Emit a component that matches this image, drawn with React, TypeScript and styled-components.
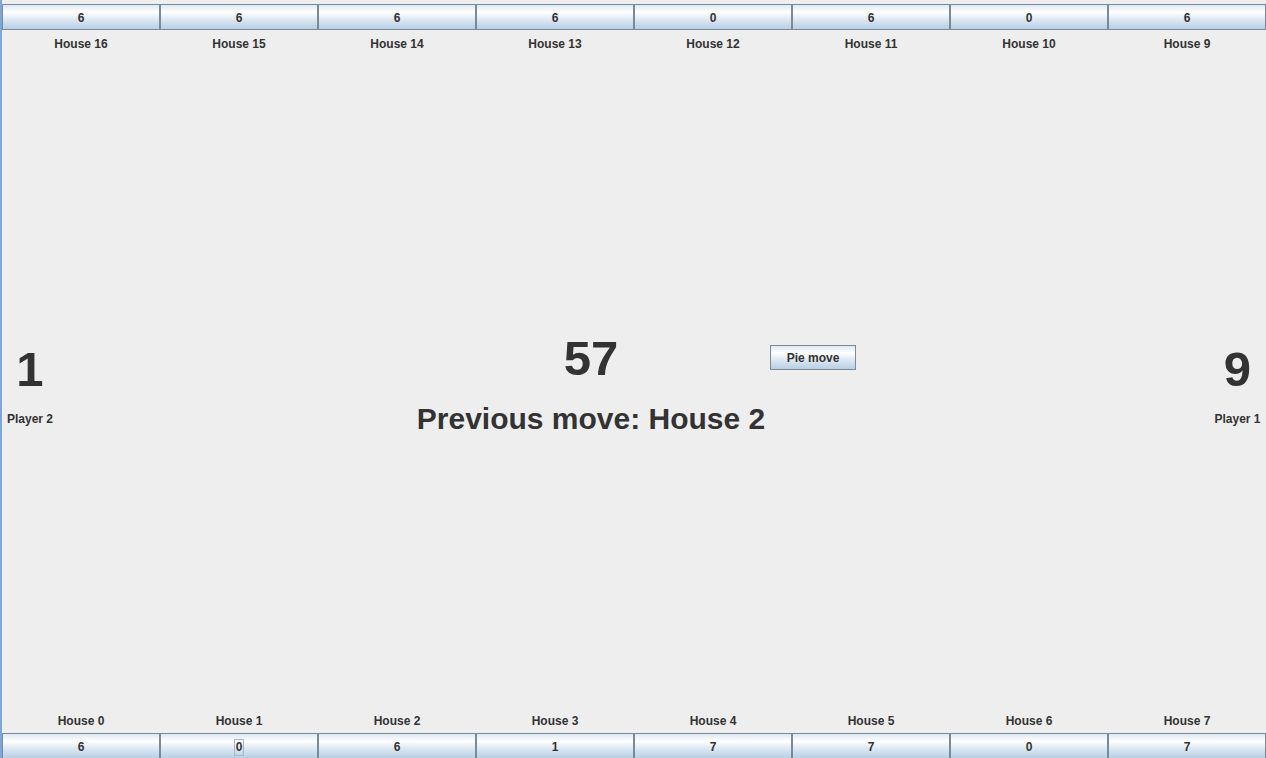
import React from 'react';
import styled, { createGlobalStyle } from 'styled-components';

const GlobalStyle = createGlobalStyle`
  html, body {
    margin: 0;
    padding: 0;
    background: #eeeeee;
    overflow: hidden;
  }
  * {
    box-sizing: border-box;
  }
`;

const Frame = styled.div`
  width: 1266px;
  height: 758px;
  overflow: hidden;
  display: flex;
  flex-direction: column;
  background: #eeeeee;
  border-left: 2px solid #7ea7d9;
  font-family: 'Liberation Sans', Arial, sans-serif;
  color: #333333;
`;

const HouseRow = styled.div<{ $top?: boolean; $bottom?: boolean }>`
  flex-shrink: 0;
  display: grid;
  grid-template-columns: repeat(8, 1fr);
  padding-top: ${(props) => (props.$top ? '4px' : '0')};
  margin-bottom: ${(props) => (props.$bottom ? '-1px' : '0')};
`;

const HouseButton = styled.button`
  height: 26px;
  margin: 0;
  padding: 2px 0 0 0;
  border: 1px solid #7a8a99;
  background: linear-gradient(#dde8f3 0%, #ffffff 30%, #dde8f3 60%, #b8cfe5 100%);
  font-family: 'Liberation Sans', Arial, sans-serif;
  font-size: 12px;
  font-weight: bold;
  color: #333333;
  display: flex;
  align-items: center;
  justify-content: center;
`;

const FocusText = styled.span<{ $focused?: boolean }>`
  padding: 0 1px;
  line-height: 15px;
  border: 1px solid ${(props) => (props.$focused ? '#a3b8cc' : 'transparent')};
`;

const HouseLabel = styled.div`
  height: 26px;
  padding-top: 2px;
  display: flex;
  align-items: center;
  justify-content: center;
  font-size: 12px;
  font-weight: bold;
`;

const Middle = styled.div`
  flex: 1;
  display: grid;
  grid-template-columns: 56px 1fr 57px;
`;

const PlayerPanel = styled.div`
  display: flex;
  flex-direction: column;
  align-items: center;
  justify-content: center;
  gap: 19px;
  padding-top: 8px;
`;

const Store = styled.div`
  font-size: 49px;
  font-weight: bold;
  line-height: 48px;
`;

const PlayerName = styled.div`
  font-size: 12px;
  font-weight: bold;
  line-height: 15px;
`;

const CenterPanel = styled.div`
  display: grid;
  grid-template-columns: 268px 530px 1fr;
  grid-template-rows: auto auto;
  align-content: center;
  row-gap: 15px;
  padding-top: 4px;
`;

const ScoreCell = styled.div`
  grid-column: 2;
  grid-row: 1;
  display: grid;
  align-items: center;
`;

const Seeds = styled.div`
  grid-area: 1 / 1;
  justify-self: center;
  font-size: 49px;
  font-weight: bold;
  line-height: 56px;
`;

const PieButton = styled.button`
  grid-area: 1 / 1;
  justify-self: end;
  width: 86px;
  height: 25px;
  margin: 0 0 2px 0;
  padding: 1px 0 0 0;
  border: 1px solid #7a8a99;
  background: linear-gradient(#dde8f3 0%, #ffffff 30%, #dde8f3 60%, #b8cfe5 100%);
  font-family: 'Liberation Sans', Arial, sans-serif;
  font-size: 12px;
  font-weight: bold;
  color: #333333;
`;

const PreviousMove = styled.div`
  grid-column: 2;
  grid-row: 2;
  justify-self: center;
  font-size: 30px;
  font-weight: bold;
  line-height: 36px;
`;

const topHouses = [
  { name: 'House 16', seeds: 6 },
  { name: 'House 15', seeds: 6 },
  { name: 'House 14', seeds: 6 },
  { name: 'House 13', seeds: 6 },
  { name: 'House 12', seeds: 0 },
  { name: 'House 11', seeds: 6 },
  { name: 'House 10', seeds: 0 },
  { name: 'House 9', seeds: 6 },
];

const bottomHouses = [
  { name: 'House 0', seeds: 6 },
  { name: 'House 1', seeds: 0 },
  { name: 'House 2', seeds: 6 },
  { name: 'House 3', seeds: 1 },
  { name: 'House 4', seeds: 7 },
  { name: 'House 5', seeds: 7 },
  { name: 'House 6', seeds: 0 },
  { name: 'House 7', seeds: 7 },
];

const focusedHouse = 'House 1';

const App = (): JSX.Element => {
  return (
    <>
      <GlobalStyle />
      <Frame>
        <HouseRow $top>
          {topHouses.map((h) => (
            <HouseButton key={h.name}>
              <FocusText>{h.seeds}</FocusText>
            </HouseButton>
          ))}
        </HouseRow>
        <HouseRow>
          {topHouses.map((h) => (
            <HouseLabel key={h.name}>{h.name}</HouseLabel>
          ))}
        </HouseRow>

        <Middle>
          <PlayerPanel>
            <Store>1</Store>
            <PlayerName>Player 2</PlayerName>
          </PlayerPanel>
          <CenterPanel>
            <ScoreCell>
              <Seeds>57</Seeds>
              <PieButton type="button">Pie move</PieButton>
            </ScoreCell>
            <PreviousMove>Previous move: House 2</PreviousMove>
          </CenterPanel>
          <PlayerPanel>
            <Store>9</Store>
            <PlayerName>Player 1</PlayerName>
          </PlayerPanel>
        </Middle>

        <HouseRow>
          {bottomHouses.map((h) => (
            <HouseLabel key={h.name}>{h.name}</HouseLabel>
          ))}
        </HouseRow>
        <HouseRow $bottom>
          {bottomHouses.map((h) => (
            <HouseButton key={h.name}>
              <FocusText $focused={h.name === focusedHouse}>{h.seeds}</FocusText>
            </HouseButton>
          ))}
        </HouseRow>
      </Frame>
    </>
  );
};

export default App;
